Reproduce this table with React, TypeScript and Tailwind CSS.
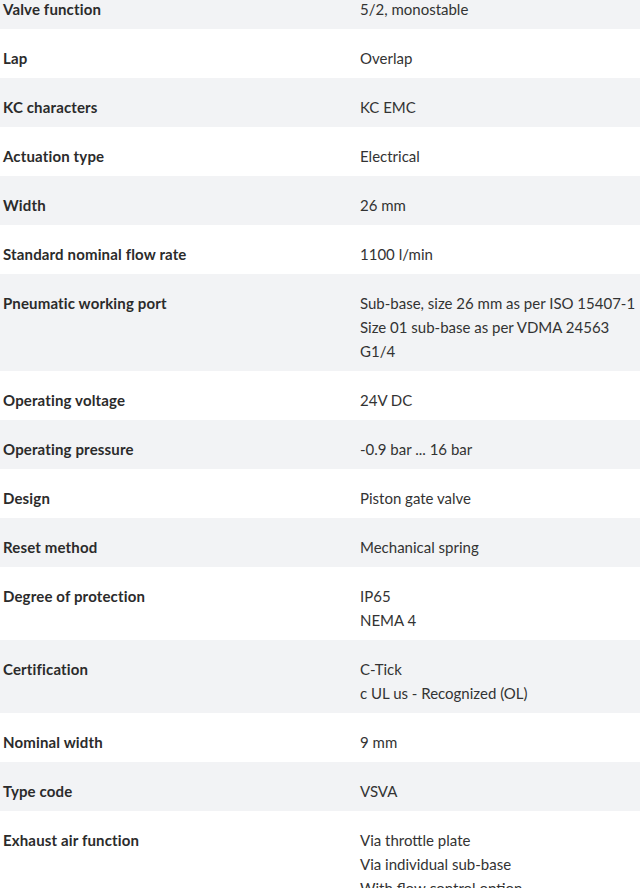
const rows: { label: string; values: string[] }[] = [
  { label: "Valve function", values: ["5/2, monostable"] },
  { label: "Lap", values: ["Overlap"] },
  { label: "KC characters", values: ["KC EMC"] },
  { label: "Actuation type", values: ["Electrical"] },
  { label: "Width", values: ["26 mm"] },
  { label: "Standard nominal flow rate", values: ["1100 l/min"] },
  {
    label: "Pneumatic working port",
    values: ["Sub-base, size 26 mm as per ISO 15407-1", "Size 01 sub-base as per VDMA 24563", "G1/4"],
  },
  { label: "Operating voltage", values: ["24V DC"] },
  { label: "Operating pressure", values: ["-0.9 bar ... 16 bar"] },
  { label: "Design", values: ["Piston gate valve"] },
  { label: "Reset method", values: ["Mechanical spring"] },
  { label: "Degree of protection", values: ["IP65", "NEMA 4"] },
  { label: "Certification", values: ["C-Tick", "c UL us - Recognized (OL)"] },
  { label: "Nominal width", values: ["9 mm"] },
  { label: "Type code", values: ["VSVA"] },
  {
    label: "Exhaust air function",
    values: ["Via throttle plate", "Via individual sub-base", "With flow control option"],
  },
]

export default function App() {
  return (
    <div className="h-[888px] overflow-hidden bg-white font-['Lato','Liberation_Sans',sans-serif] text-[15px] leading-[24px] text-[#333]">
      <div className="-mt-[20px]">
        {rows.map((row, i) => (
          <div
            key={i}
            className={`flex pt-[17px] pb-[8px] ${i % 2 === 0 ? "bg-[#f2f3f5]" : "bg-white"}`}
          >
            <div className="w-[360px] shrink-0 pl-[3px] font-bold tracking-[0.15px] text-[#2b2b2b]">{row.label}</div>
            <div className="flex-1 whitespace-nowrap">
              {row.values.map((v, j) => (
                <div key={j}>{v}</div>
              ))}
            </div>
          </div>
        ))}
      </div>
    </div>
  )
}
